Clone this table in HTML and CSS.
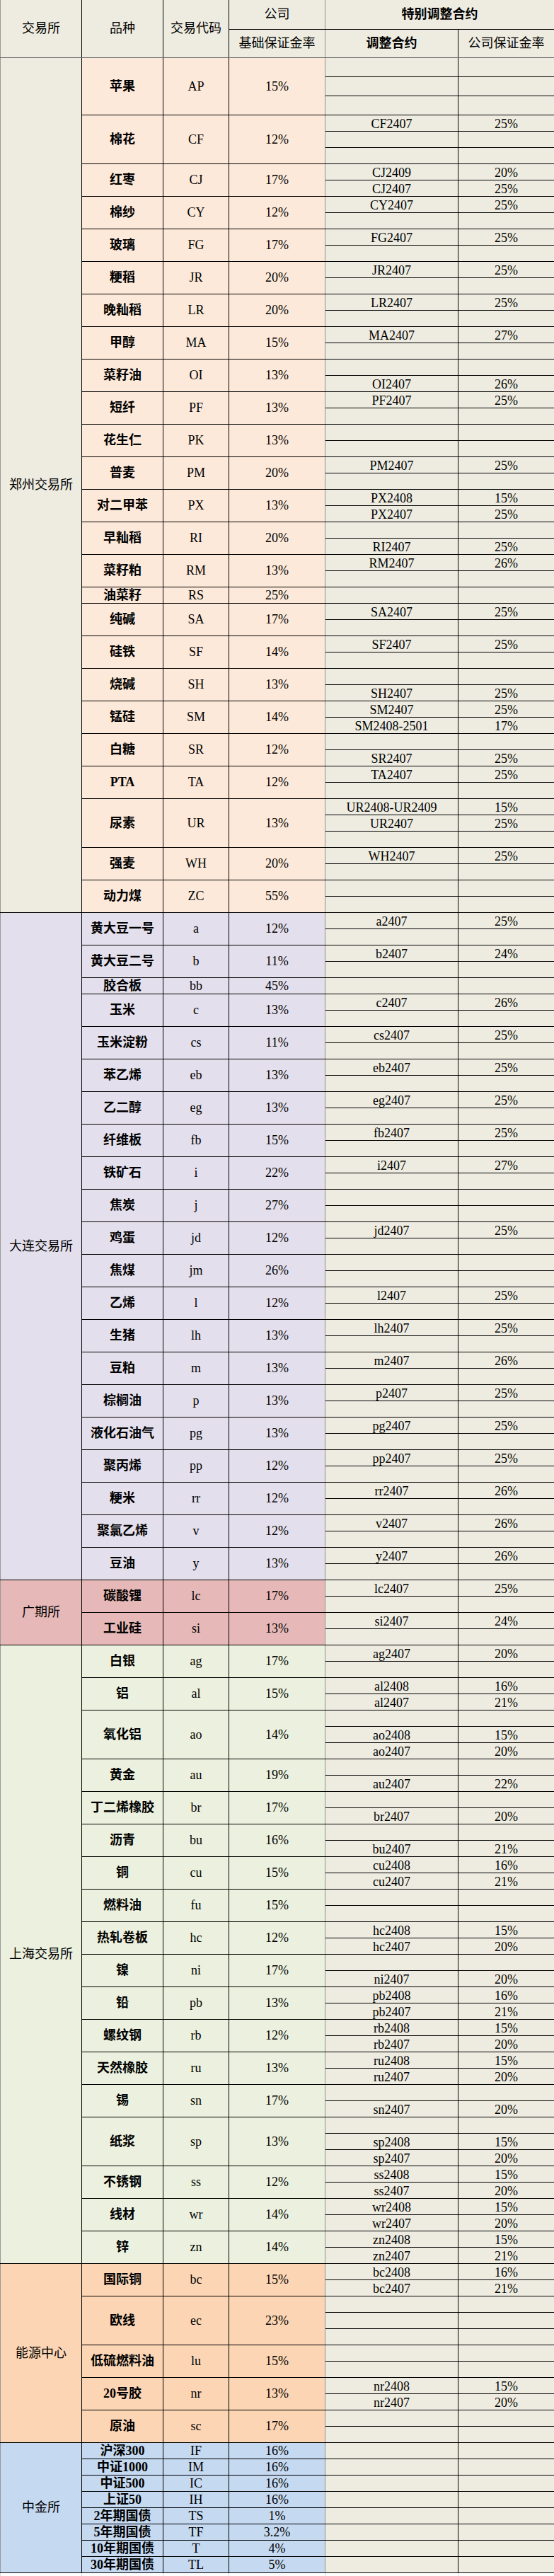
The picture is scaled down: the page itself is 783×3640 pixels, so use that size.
FILE: index.html
```html
<!DOCTYPE html>
<html lang="zh-CN">
<head>
<meta charset="utf-8">
<title>保证金率</title>
<link rel="stylesheet" href="styles.css">
</head>
<body>
<table class="sheet">
<colgroup>
<col class="c-ex"><col class="c-pn"><col class="c-pc"><col class="c-pr"><col class="c-ac"><col class="c-ar">
</colgroup>
<thead>
<tr class="h1"><th rowspan="2" class="first">交易所</th><th rowspan="2">品种</th><th rowspan="2">交易代码</th><th class="sep">公司</th><th colspan="2" class="b">特别调整合约</th></tr>
<tr class="h2"><th class="sep">基础保证金率</th><th class="b">调整合约</th><th>公司保证金率</th></tr>
</thead>
<tbody class="zz">
<tr class="t"><td class="ex" rowspan="52">郑州交易所</td><td class="pn" rowspan="3">苹果</td><td class="pc" rowspan="3">AP</td><td class="pr" rowspan="3">15%</td><td></td><td></td></tr>
<tr class="t"><td></td><td></td></tr>
<tr class="t"><td></td><td></td></tr>
<tr><td class="pn" rowspan="3">棉花</td><td class="pc" rowspan="3">CF</td><td class="pr" rowspan="3">12%</td><td>CF2407</td><td>25%</td></tr>
<tr><td></td><td></td></tr>
<tr><td></td><td></td></tr>
<tr><td class="pn" rowspan="2">红枣</td><td class="pc" rowspan="2">CJ</td><td class="pr" rowspan="2">17%</td><td>CJ2409</td><td>20%</td></tr>
<tr><td>CJ2407</td><td>25%</td></tr>
<tr><td class="pn" rowspan="2">棉纱</td><td class="pc" rowspan="2">CY</td><td class="pr" rowspan="2">12%</td><td>CY2407</td><td>25%</td></tr>
<tr><td></td><td></td></tr>
<tr><td class="pn" rowspan="2">玻璃</td><td class="pc" rowspan="2">FG</td><td class="pr" rowspan="2">17%</td><td>FG2407</td><td>25%</td></tr>
<tr><td></td><td></td></tr>
<tr><td class="pn" rowspan="2">粳稻</td><td class="pc" rowspan="2">JR</td><td class="pr" rowspan="2">20%</td><td>JR2407</td><td>25%</td></tr>
<tr><td></td><td></td></tr>
<tr><td class="pn" rowspan="2">晚籼稻</td><td class="pc" rowspan="2">LR</td><td class="pr" rowspan="2">20%</td><td>LR2407</td><td>25%</td></tr>
<tr><td></td><td></td></tr>
<tr><td class="pn" rowspan="2">甲醇</td><td class="pc" rowspan="2">MA</td><td class="pr" rowspan="2">15%</td><td>MA2407</td><td>27%</td></tr>
<tr><td></td><td></td></tr>
<tr><td class="pn" rowspan="2">菜籽油</td><td class="pc" rowspan="2">OI</td><td class="pr" rowspan="2">13%</td><td></td><td></td></tr>
<tr><td>OI2407</td><td>26%</td></tr>
<tr><td class="pn" rowspan="2">短纤</td><td class="pc" rowspan="2">PF</td><td class="pr" rowspan="2">13%</td><td>PF2407</td><td>25%</td></tr>
<tr><td></td><td></td></tr>
<tr><td class="pn" rowspan="2">花生仁</td><td class="pc" rowspan="2">PK</td><td class="pr" rowspan="2">13%</td><td></td><td></td></tr>
<tr><td></td><td></td></tr>
<tr><td class="pn" rowspan="2">普麦</td><td class="pc" rowspan="2">PM</td><td class="pr" rowspan="2">20%</td><td>PM2407</td><td>25%</td></tr>
<tr><td></td><td></td></tr>
<tr><td class="pn" rowspan="2">对二甲苯</td><td class="pc" rowspan="2">PX</td><td class="pr" rowspan="2">13%</td><td>PX2408</td><td>15%</td></tr>
<tr><td>PX2407</td><td>25%</td></tr>
<tr><td class="pn" rowspan="2">早籼稻</td><td class="pc" rowspan="2">RI</td><td class="pr" rowspan="2">20%</td><td></td><td></td></tr>
<tr><td>RI2407</td><td>25%</td></tr>
<tr><td class="pn" rowspan="2">菜籽粕</td><td class="pc" rowspan="2">RM</td><td class="pr" rowspan="2">13%</td><td>RM2407</td><td>26%</td></tr>
<tr><td></td><td></td></tr>
<tr><td class="pn">油菜籽</td><td class="pc">RS</td><td class="pr">25%</td><td></td><td></td></tr>
<tr><td class="pn" rowspan="2">纯碱</td><td class="pc" rowspan="2">SA</td><td class="pr" rowspan="2">17%</td><td>SA2407</td><td>25%</td></tr>
<tr><td></td><td></td></tr>
<tr><td class="pn" rowspan="2">硅铁</td><td class="pc" rowspan="2">SF</td><td class="pr" rowspan="2">14%</td><td>SF2407</td><td>25%</td></tr>
<tr><td></td><td></td></tr>
<tr><td class="pn" rowspan="2">烧碱</td><td class="pc" rowspan="2">SH</td><td class="pr" rowspan="2">13%</td><td></td><td></td></tr>
<tr><td>SH2407</td><td>25%</td></tr>
<tr><td class="pn" rowspan="2">锰硅</td><td class="pc" rowspan="2">SM</td><td class="pr" rowspan="2">14%</td><td>SM2407</td><td>25%</td></tr>
<tr><td>SM2408-2501</td><td>17%</td></tr>
<tr><td class="pn" rowspan="2">白糖</td><td class="pc" rowspan="2">SR</td><td class="pr" rowspan="2">12%</td><td></td><td></td></tr>
<tr><td>SR2407</td><td>25%</td></tr>
<tr><td class="pn" rowspan="2">PTA</td><td class="pc" rowspan="2">TA</td><td class="pr" rowspan="2">12%</td><td>TA2407</td><td>25%</td></tr>
<tr><td></td><td></td></tr>
<tr><td class="pn" rowspan="3">尿素</td><td class="pc" rowspan="3">UR</td><td class="pr" rowspan="3">13%</td><td>UR2408-UR2409</td><td>15%</td></tr>
<tr><td>UR2407</td><td>25%</td></tr>
<tr><td></td><td></td></tr>
<tr><td class="pn" rowspan="2">强麦</td><td class="pc" rowspan="2">WH</td><td class="pr" rowspan="2">20%</td><td>WH2407</td><td>25%</td></tr>
<tr><td></td><td></td></tr>
<tr><td class="pn" rowspan="2">动力煤</td><td class="pc" rowspan="2">ZC</td><td class="pr" rowspan="2">55%</td><td></td><td></td></tr>
<tr><td></td><td></td></tr>
</tbody>
<tbody class="dl">
<tr><td class="ex" rowspan="41">大连交易所</td><td class="pn" rowspan="2">黄大豆一号</td><td class="pc" rowspan="2">a</td><td class="pr" rowspan="2">12%</td><td>a2407</td><td>25%</td></tr>
<tr><td></td><td></td></tr>
<tr><td class="pn" rowspan="2">黄大豆二号</td><td class="pc" rowspan="2">b</td><td class="pr" rowspan="2">11%</td><td>b2407</td><td>24%</td></tr>
<tr><td></td><td></td></tr>
<tr><td class="pn">胶合板</td><td class="pc">bb</td><td class="pr">45%</td><td></td><td></td></tr>
<tr><td class="pn" rowspan="2">玉米</td><td class="pc" rowspan="2">c</td><td class="pr" rowspan="2">13%</td><td>c2407</td><td>26%</td></tr>
<tr><td></td><td></td></tr>
<tr><td class="pn" rowspan="2">玉米淀粉</td><td class="pc" rowspan="2">cs</td><td class="pr" rowspan="2">11%</td><td>cs2407</td><td>25%</td></tr>
<tr><td></td><td></td></tr>
<tr><td class="pn" rowspan="2">苯乙烯</td><td class="pc" rowspan="2">eb</td><td class="pr" rowspan="2">13%</td><td>eb2407</td><td>25%</td></tr>
<tr><td></td><td></td></tr>
<tr><td class="pn" rowspan="2">乙二醇</td><td class="pc" rowspan="2">eg</td><td class="pr" rowspan="2">13%</td><td>eg2407</td><td>25%</td></tr>
<tr><td></td><td></td></tr>
<tr><td class="pn" rowspan="2">纤维板</td><td class="pc" rowspan="2">fb</td><td class="pr" rowspan="2">15%</td><td>fb2407</td><td>25%</td></tr>
<tr><td></td><td></td></tr>
<tr><td class="pn" rowspan="2">铁矿石</td><td class="pc" rowspan="2">i</td><td class="pr" rowspan="2">22%</td><td>i2407</td><td>27%</td></tr>
<tr><td></td><td></td></tr>
<tr><td class="pn" rowspan="2">焦炭</td><td class="pc" rowspan="2">j</td><td class="pr" rowspan="2">27%</td><td></td><td></td></tr>
<tr><td></td><td></td></tr>
<tr><td class="pn" rowspan="2">鸡蛋</td><td class="pc" rowspan="2">jd</td><td class="pr" rowspan="2">12%</td><td>jd2407</td><td>25%</td></tr>
<tr><td></td><td></td></tr>
<tr><td class="pn" rowspan="2">焦煤</td><td class="pc" rowspan="2">jm</td><td class="pr" rowspan="2">26%</td><td></td><td></td></tr>
<tr><td></td><td></td></tr>
<tr><td class="pn" rowspan="2">乙烯</td><td class="pc" rowspan="2">l</td><td class="pr" rowspan="2">12%</td><td>l2407</td><td>25%</td></tr>
<tr><td></td><td></td></tr>
<tr><td class="pn" rowspan="2">生猪</td><td class="pc" rowspan="2">lh</td><td class="pr" rowspan="2">13%</td><td>lh2407</td><td>25%</td></tr>
<tr><td></td><td></td></tr>
<tr><td class="pn" rowspan="2">豆粕</td><td class="pc" rowspan="2">m</td><td class="pr" rowspan="2">13%</td><td>m2407</td><td>26%</td></tr>
<tr><td></td><td></td></tr>
<tr><td class="pn" rowspan="2">棕榈油</td><td class="pc" rowspan="2">p</td><td class="pr" rowspan="2">13%</td><td>p2407</td><td>25%</td></tr>
<tr><td></td><td></td></tr>
<tr><td class="pn" rowspan="2">液化石油气</td><td class="pc" rowspan="2">pg</td><td class="pr" rowspan="2">13%</td><td>pg2407</td><td>25%</td></tr>
<tr><td></td><td></td></tr>
<tr><td class="pn" rowspan="2">聚丙烯</td><td class="pc" rowspan="2">pp</td><td class="pr" rowspan="2">12%</td><td>pp2407</td><td>25%</td></tr>
<tr><td></td><td></td></tr>
<tr><td class="pn" rowspan="2">粳米</td><td class="pc" rowspan="2">rr</td><td class="pr" rowspan="2">12%</td><td>rr2407</td><td>26%</td></tr>
<tr><td></td><td></td></tr>
<tr><td class="pn" rowspan="2">聚氯乙烯</td><td class="pc" rowspan="2">v</td><td class="pr" rowspan="2">12%</td><td>v2407</td><td>26%</td></tr>
<tr><td></td><td></td></tr>
<tr><td class="pn" rowspan="2">豆油</td><td class="pc" rowspan="2">y</td><td class="pr" rowspan="2">13%</td><td>y2407</td><td>26%</td></tr>
<tr><td></td><td></td></tr>
</tbody>
<tbody class="gz">
<tr><td class="ex" rowspan="4">广期所</td><td class="pn" rowspan="2">碳酸锂</td><td class="pc" rowspan="2">lc</td><td class="pr" rowspan="2">17%</td><td>lc2407</td><td>25%</td></tr>
<tr><td></td><td></td></tr>
<tr><td class="pn" rowspan="2">工业硅</td><td class="pc" rowspan="2">si</td><td class="pr" rowspan="2">13%</td><td>si2407</td><td>24%</td></tr>
<tr><td></td><td></td></tr>
</tbody>
<tbody class="sh">
<tr><td class="ex" rowspan="38">上海交易所</td><td class="pn" rowspan="2">白银</td><td class="pc" rowspan="2">ag</td><td class="pr" rowspan="2">17%</td><td>ag2407</td><td>20%</td></tr>
<tr><td></td><td></td></tr>
<tr><td class="pn" rowspan="2">铝</td><td class="pc" rowspan="2">al</td><td class="pr" rowspan="2">15%</td><td>al2408</td><td>16%</td></tr>
<tr><td>al2407</td><td>21%</td></tr>
<tr><td class="pn" rowspan="3">氧化铝</td><td class="pc" rowspan="3">ao</td><td class="pr" rowspan="3">14%</td><td></td><td></td></tr>
<tr><td>ao2408</td><td>15%</td></tr>
<tr><td>ao2407</td><td>20%</td></tr>
<tr><td class="pn" rowspan="2">黄金</td><td class="pc" rowspan="2">au</td><td class="pr" rowspan="2">19%</td><td></td><td></td></tr>
<tr><td>au2407</td><td>22%</td></tr>
<tr><td class="pn" rowspan="2">丁二烯橡胶</td><td class="pc" rowspan="2">br</td><td class="pr" rowspan="2">17%</td><td></td><td></td></tr>
<tr><td>br2407</td><td>20%</td></tr>
<tr><td class="pn" rowspan="2">沥青</td><td class="pc" rowspan="2">bu</td><td class="pr" rowspan="2">16%</td><td></td><td></td></tr>
<tr><td>bu2407</td><td>21%</td></tr>
<tr><td class="pn" rowspan="2">铜</td><td class="pc" rowspan="2">cu</td><td class="pr" rowspan="2">15%</td><td>cu2408</td><td>16%</td></tr>
<tr><td>cu2407</td><td>21%</td></tr>
<tr><td class="pn" rowspan="2">燃料油</td><td class="pc" rowspan="2">fu</td><td class="pr" rowspan="2">15%</td><td></td><td></td></tr>
<tr><td></td><td></td></tr>
<tr><td class="pn" rowspan="2">热轧卷板</td><td class="pc" rowspan="2">hc</td><td class="pr" rowspan="2">12%</td><td>hc2408</td><td>15%</td></tr>
<tr><td>hc2407</td><td>20%</td></tr>
<tr><td class="pn" rowspan="2">镍</td><td class="pc" rowspan="2">ni</td><td class="pr" rowspan="2">17%</td><td></td><td></td></tr>
<tr><td>ni2407</td><td>20%</td></tr>
<tr><td class="pn" rowspan="2">铅</td><td class="pc" rowspan="2">pb</td><td class="pr" rowspan="2">13%</td><td>pb2408</td><td>16%</td></tr>
<tr><td>pb2407</td><td>21%</td></tr>
<tr><td class="pn" rowspan="2">螺纹钢</td><td class="pc" rowspan="2">rb</td><td class="pr" rowspan="2">12%</td><td>rb2408</td><td>15%</td></tr>
<tr><td>rb2407</td><td>20%</td></tr>
<tr><td class="pn" rowspan="2">天然橡胶</td><td class="pc" rowspan="2">ru</td><td class="pr" rowspan="2">13%</td><td>ru2408</td><td>15%</td></tr>
<tr><td>ru2407</td><td>20%</td></tr>
<tr><td class="pn" rowspan="2">锡</td><td class="pc" rowspan="2">sn</td><td class="pr" rowspan="2">17%</td><td></td><td></td></tr>
<tr><td>sn2407</td><td>20%</td></tr>
<tr><td class="pn" rowspan="3">纸浆</td><td class="pc" rowspan="3">sp</td><td class="pr" rowspan="3">13%</td><td></td><td></td></tr>
<tr><td>sp2408</td><td>15%</td></tr>
<tr><td>sp2407</td><td>20%</td></tr>
<tr><td class="pn" rowspan="2">不锈钢</td><td class="pc" rowspan="2">ss</td><td class="pr" rowspan="2">12%</td><td>ss2408</td><td>15%</td></tr>
<tr><td>ss2407</td><td>20%</td></tr>
<tr><td class="pn" rowspan="2">线材</td><td class="pc" rowspan="2">wr</td><td class="pr" rowspan="2">14%</td><td>wr2408</td><td>15%</td></tr>
<tr><td>wr2407</td><td>20%</td></tr>
<tr><td class="pn" rowspan="2">锌</td><td class="pc" rowspan="2">zn</td><td class="pr" rowspan="2">14%</td><td>zn2408</td><td>15%</td></tr>
<tr><td>zn2407</td><td>21%</td></tr>
</tbody>
<tbody class="ny">
<tr><td class="ex" rowspan="11">能源中心</td><td class="pn" rowspan="2">国际铜</td><td class="pc" rowspan="2">bc</td><td class="pr" rowspan="2">15%</td><td>bc2408</td><td>16%</td></tr>
<tr><td>bc2407</td><td>21%</td></tr>
<tr><td class="pn" rowspan="3">欧线</td><td class="pc" rowspan="3">ec</td><td class="pr" rowspan="3">23%</td><td></td><td></td></tr>
<tr><td></td><td></td></tr>
<tr><td></td><td></td></tr>
<tr><td class="pn" rowspan="2">低硫燃料油</td><td class="pc" rowspan="2">lu</td><td class="pr" rowspan="2">15%</td><td></td><td></td></tr>
<tr><td></td><td></td></tr>
<tr><td class="pn" rowspan="2">20号胶</td><td class="pc" rowspan="2">nr</td><td class="pr" rowspan="2">13%</td><td>nr2408</td><td>15%</td></tr>
<tr><td>nr2407</td><td>20%</td></tr>
<tr><td class="pn" rowspan="2">原油</td><td class="pc" rowspan="2">sc</td><td class="pr" rowspan="2">17%</td><td></td><td></td></tr>
<tr><td></td><td></td></tr>
</tbody>
<tbody class="zj">
<tr><td class="ex" rowspan="8">中金所</td><td class="pn">沪深300</td><td class="pc">IF</td><td class="pr">16%</td><td></td><td></td></tr>
<tr><td class="pn">中证1000</td><td class="pc">IM</td><td class="pr">16%</td><td></td><td></td></tr>
<tr><td class="pn">中证500</td><td class="pc">IC</td><td class="pr">16%</td><td></td><td></td></tr>
<tr><td class="pn">上证50</td><td class="pc">IH</td><td class="pr">16%</td><td></td><td></td></tr>
<tr><td class="pn">2年期国债</td><td class="pc">TS</td><td class="pr">1%</td><td></td><td></td></tr>
<tr><td class="pn">5年期国债</td><td class="pc">TF</td><td class="pr">3.2%</td><td></td><td></td></tr>
<tr><td class="pn">10年期国债</td><td class="pc">T</td><td class="pr">4%</td><td></td><td></td></tr>
<tr><td class="pn">30年期国债</td><td class="pc">TL</td><td class="pr">5%</td><td></td><td></td></tr>
</tbody>
<tbody class="tail">
<tr><td></td><td></td><td></td><td></td><td></td><td></td></tr>
</tbody>
</table>
</body>
</html>
```

FILE: styles.css
```css
html, body {
  margin: 0;
  padding: 0;
  background: #ffffff;
}

body {
  font-family: "Liberation Serif", "Noto Sans CJK SC", serif;
  font-size: 18px;
  color: #000000;
}

.sheet {
  border-collapse: collapse;
  table-layout: fixed;
  width: 783px;
}

.c-ex { width: 115px; }
.c-pn { width: 115px; }
.c-pc { width: 93px; }
.c-pr { width: 136px; }
.c-ac { width: 188px; }
.c-ar { width: 136px; }

.sheet th,
.sheet td {
  border: 1px solid #000000;
  padding: 0;
  text-align: center;
  line-height: 20px;
  white-space: nowrap;
  overflow: hidden;
}

/* header */
.sheet thead th {
  background: #eeece1;
  font-weight: normal;
  vertical-align: middle;
  border-top: 0;
}
.sheet thead tr.h1 { height: 41px; }
.sheet thead tr.h2 { height: 40px; }
.sheet thead tr.h2 th,
.sheet thead th[rowspan] { border-bottom-color: #666666; }
.sheet thead th.first { border-left-color: #999999; }
.sheet thead th.b { font-weight: bold; }
.sheet thead th.sep { border-right-color: #8c8c8c; }

/* body rows */
.sheet tbody tr { height: 23px; }
.sheet tbody tr.t { height: 27px; }

.sheet tbody td {
  background: #eeece1;
  vertical-align: bottom;
}

.sheet td.ex,
.sheet td.pn,
.sheet td.pc,
.sheet td.pr {
  vertical-align: middle;
}

.sheet td.ex { border-left-color: #999999; }
.sheet td.pn { font-weight: bold; }
.sheet td.pr { border-right-color: #8c8c8c; }

/* exchange colour groups */
.zz td.ex { background: #eeece1; }
.zz td.pn, .zz td.pc, .zz td.pr { background: #fde9d9; }

.dl td.ex, .dl td.pn, .dl td.pc, .dl td.pr { background: #e4dfec; }

.gz td.ex, .gz td.pn, .gz td.pc, .gz td.pr { background: #e6b8b7; }

.sh td.ex, .sh td.pn, .sh td.pc, .sh td.pr { background: #ebf1de; }

.ny td.ex, .ny td.pn, .ny td.pc, .ny td.pr { background: #fcd5b4; }

.zj td.ex, .zj td.pn, .zj td.pc, .zj td.pr { background: #c5d9f1; }

/* blank spreadsheet row under the table */
.sheet tbody.tail tr { height: 20px; }
.sheet tbody.tail td {
  background: #ffffff;
  border-color: #d9d9d9;
  border-bottom: 0;
}
```
